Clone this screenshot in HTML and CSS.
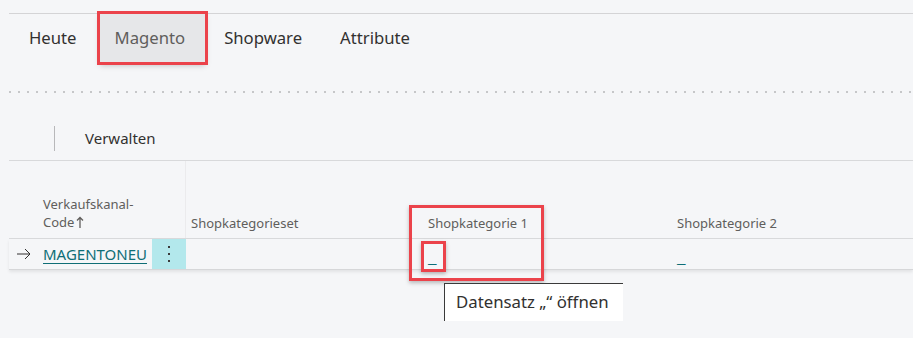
FILE: index.html
```html
<!DOCTYPE html>
<html lang="de">
<head>
    <meta charset="UTF-8">
    <meta name="viewport" content="width=device-width, initial-scale=1.0">
    <title>Verkaufskanäle</title>
    <link rel="stylesheet" href="styles.css">
</head>
<body>
    <div class="page">
        <nav class="pivot">
            <div class="pivot-tab">Heute</div>
            <div class="pivot-tab active">Magento</div>
            <div class="pivot-tab">Shopware</div>
            <div class="pivot-tab">Attribute</div>
        </nav>

        <div class="dotted-rule"></div>

        <div class="action-bar">
            <span class="action-sep"></span>
            <span class="action">Verwalten</span>
        </div>

        <div class="list">
            <div class="list-head">
                <div class="cell cell-arrow"></div>
                <div class="cell cell-code">
                    Verkaufskanal-<br>Code<svg class="sort" width="8" height="12" viewBox="0 0 8 12">
                        <path d="M4 12V1.5M1 4.5l3-3 3 3" fill="none" stroke="#605e5c" stroke-width="1.3"/>
                    </svg>
                </div>
                <div class="cell cell-set">Shopkategorieset</div>
                <div class="cell cell-cat1">Shopkategorie 1</div>
                <div class="cell cell-cat2">Shopkategorie 2</div>
            </div>
            <div class="list-row">
                <div class="cell cell-arrow">
                    <svg width="15" height="12" viewBox="0 0 15 12">
                        <path d="M1 6h13M9 1l5 5-5 5" fill="none" stroke="#323130" stroke-width="1"/>
                    </svg>
                </div>
                <div class="cell cell-code">
                    <a class="link" href="#">MAGENTONEU</a>
                    <span class="row-menu"><i></i><i></i><i></i></span>
                </div>
                <div class="cell cell-set"></div>
                <div class="cell cell-cat1"><a class="link blank" href="#">_</a></div>
                <div class="cell cell-cat2"><a class="link blank" href="#">_</a></div>
            </div>
        </div>
    </div>

    <!-- Markierungen und Tooltip liegen über dem Inhalt -->
    <div class="mark mark-column"></div>
    <div class="mark mark-cell"></div>
    <div class="tooltip">Datensatz „“ öffnen</div>
</body>
</html>
```

FILE: styles.css
```css
* {
    margin: 0;
    padding: 0;
    box-sizing: border-box;
}

body {
    font-family: 'Noto Sans', 'Open Sans', sans-serif;
    background: #f5f6f8;
    color: #323130;
    width: 913px;
    height: 338px;
    overflow: hidden;
    position: relative;
}

.page {
    padding-left: 9px;
    padding-top: 13px;
}

.pivot {
    display: flex;
    border-top: 1px solid #d4d4d6;
    height: 49px;
}

.pivot-tab {
    display: flex;
    align-items: center;
    padding: 0 19px 2px 19px;
    font-size: 16.7px;
    color: #323130;
}

.pivot-tab:first-child {
    padding-left: 20px;
}

.pivot-tab.active {
    background: #e6e7e9;
    color: #5f5e5c;
    margin-left: 4px;
    padding: 0 20px 2px 15px;
    outline: 3px solid #eb434b;
    box-shadow: 0 3px 6px rgba(0, 0, 0, 0.25);
}

.dotted-rule {
    margin-top: 29px;
    height: 2px;
    background: linear-gradient(to right, #c6c7c9 2px, transparent 2px) repeat-x;
    background-size: 9px 2px;
}

.action-bar {
    display: flex;
    align-items: flex-start;
    height: 68px;
    padding: 33px 0 0 45px;
    border-bottom: 1px solid #d8d9db;
}

.action-sep {
    width: 1px;
    height: 25px;
    background: #b8b8ba;
    margin-right: 30px;
}

.action {
    font-size: 15px;
    color: #323130;
    line-height: 25px;
}

.list-head,
.list-row {
    display: flex;
}

.list-head {
    height: 78px;
    align-items: flex-end;
    border-bottom: 1px solid #d9dadc;
    font-size: 13px;
    color: #605e5c;
    line-height: 18px;
}

.list-head .cell {
    padding-bottom: 6px;
}

.list-head .cell-code {
    border-right: 1px solid #ebebed;
    align-self: stretch;
    padding-top: 34px;
}

.sort {
    margin-left: 2px;
    vertical-align: -1px;
}

.cell-arrow {
    width: 34px;
    flex: none;
}

.cell-code {
    width: 143px;
    flex: none;
}

.cell-set {
    width: 237px;
    flex: none;
    padding-left: 5px;
}

.cell-cat1 {
    width: 249px;
    flex: none;
    padding-left: 5px;
}

.cell-cat2 {
    flex: 1;
    padding-left: 5px;
}

.list-row {
    height: 31px;
    align-items: stretch;
    border-bottom: 1px solid #d6d7d9;
    box-shadow: 0 2px 3px rgba(0, 0, 0, 0.08);
    font-size: 15px;
}

.list-row .cell {
    display: flex;
    align-items: center;
}

.list-row .cell-arrow {
    padding-left: 7px;
}

.list-row .cell-code {
    justify-content: space-between;
}

.link {
    color: #0f6e76;
    text-decoration: underline;
    text-underline-offset: 3px;
}

.link.blank {
    text-decoration: none;
    font-size: 16px;
    padding-top: 5px;
    transform: scaleX(1.2);
    transform-origin: left;
}

.row-menu {
    width: 34px;
    align-self: stretch;
    background: #b3e8ec;
    display: flex;
    flex-direction: column;
    align-items: center;
    justify-content: center;
    gap: 5px;
}

.row-menu i {
    width: 2px;
    height: 2px;
    background: #3b3b3b;
}

.mark {
    position: absolute;
    border: 3px solid #eb434b;
    box-shadow: 0 2px 4px rgba(0, 0, 0, 0.25);
}

.mark-column {
    left: 409px;
    top: 205px;
    width: 135px;
    height: 76px;
}

.mark-cell {
    left: 421px;
    top: 241px;
    width: 25px;
    height: 31px;
}

.tooltip {
    position: absolute;
    left: 444px;
    top: 283px;
    width: 179px;
    height: 38px;
    background: #fff;
    border-top: 1px solid #3a3a3a;
    border-left: 1px solid #3a3a3a;
    padding: 6px 0 0 11px;
    font-size: 16.8px;
    color: #323130;
}
```
